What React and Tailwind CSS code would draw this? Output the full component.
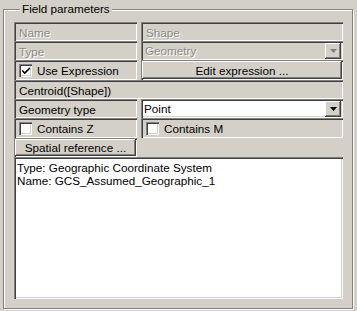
import { Check } from 'lucide-react';

const sunken =
  'shadow-[inset_1px_1px_0_#808080,inset_2px_2px_0_#404040,inset_-1px_-1px_0_#ffffff,inset_-2px_-2px_0_#d4d0c8]';
const raised =
  'shadow-[inset_-1px_-1px_0_#404040,inset_1px_1px_0_#ffffff,inset_-2px_-2px_0_#808080]';
const disabledText = 'text-[#8c8a84] [text-shadow:1px_1px_0_#ffffff]';

function Cell({ children, className = '' }) {
  return (
    <div className={`flex items-center pl-[5px] pr-[2px] pt-[1px] bg-[#d4d0c8] ${sunken} ${className}`}>
      {children}
    </div>
  );
}

function CheckBox({ checked }) {
  return (
    <span className={`w-[13px] h-[13px] shrink-0 bg-white flex items-center justify-center ${sunken}`}>
      {checked && <Check size={10} strokeWidth={4} className="text-black" />}
    </span>
  );
}

function DropButton({ disabled }) {
  return (
    <span className={`w-[16px] h-[16px] bg-[#d4d0c8] flex items-center justify-center ${raised}`}>
      <svg width="7" height="4" viewBox="0 0 7 4">
        <path d="M0 0h7L3.5 4z" fill={disabled ? '#808080' : '#000000'} />
      </svg>
    </span>
  );
}

export default function App() {
  return (
    <div className="w-[357px] h-[311px] bg-[#d4d0c8] pt-[2px] pl-[3px] font-['Liberation_Sans',Arial,sans-serif] text-[11.7px] text-black leading-[13px]">
      <fieldset className="w-[350px] h-[307px] border border-[#808080] shadow-[inset_1px_1px_0_#ffffff,1px_1px_0_#ffffff] pl-[10px] pt-[6px]">
        <legend className="ml-[6px] px-[2px] leading-[14px] bg-[#d4d0c8]">Field parameters</legend>

        <div className="grid grid-cols-[123px_202px] gap-x-[4px] grid-rows-[19px_19px_20px_19px_19px_20px_19px]">
          {/* Name / Shape */}
          <Cell className={disabledText}>Name</Cell>
          <Cell className={disabledText}>Shape</Cell>

          {/* Type / Geometry */}
          <Cell className={disabledText}>Type</Cell>
          <div className={`flex items-center justify-between pl-[4px] pr-[2px] bg-[#d4d0c8] ${sunken}`}>
            <span className={disabledText}>Geometry</span>
            <DropButton disabled />
          </div>

          {/* Use Expression / Edit expression */}
          <Cell className="pl-[2px] gap-[5px]">
            <CheckBox checked />
            <span>Use Expression</span>
          </Cell>
          <div className={`p-[1px] ${sunken}`}>
            <button className={`w-full h-full bg-[#d4d0c8] flex items-center justify-center ${raised}`}>
              Edit expression ...
            </button>
          </div>

          {/* Expression */}
          <Cell className="col-span-2">Centroid([Shape])</Cell>

          {/* Geometry type */}
          <Cell>Geometry type</Cell>
          <div className={`flex items-center justify-between pl-[3px] pr-[2px] bg-white ${sunken}`}>
            <span>Point</span>
            <DropButton />
          </div>

          {/* Contains Z / M */}
          <Cell className="pl-[2px] gap-[5px]">
            <CheckBox />
            <span>Contains Z</span>
          </Cell>
          <Cell className="pl-[2px] gap-[5px]">
            <CheckBox />
            <span>Contains M</span>
          </Cell>

          {/* Spatial reference */}
          <div className={`p-[1px] ${sunken}`}>
            <button className={`w-full h-full bg-[#d4d0c8] flex items-center justify-center ${raised}`}>
              Spatial reference ...
            </button>
          </div>
          <div />
        </div>

        {/* Spatial reference info */}
        <div className={`w-[329px] h-[142px] bg-white pl-[3px] pt-[4px] ${sunken}`}>
          <div>Type: Geographic Coordinate System</div>
          <div>Name: GCS_Assumed_Geographic_1</div>
        </div>
      </fieldset>
    </div>
  );
}
